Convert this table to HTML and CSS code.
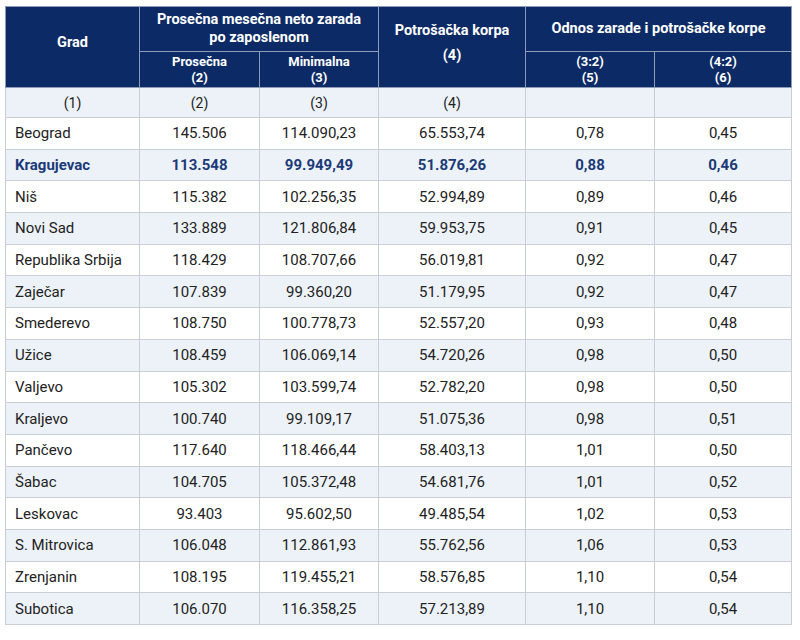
FILE: index.html
```html
<!DOCTYPE html>
<html lang="sr">
<head>
    <meta charset="UTF-8">
    <meta name="viewport" content="width=device-width, initial-scale=1.0">
    <title>Zarade i potrošačka korpa</title>
    <link rel="stylesheet" href="styles.css">
</head>
<body>
<table class="wage-table">
    <colgroup>
        <col class="c-city">
        <col class="c-avg">
        <col class="c-min">
        <col class="c-basket">
        <col class="c-r1">
        <col class="c-r2">
    </colgroup>
    <thead>
        <tr class="head-top">
            <th rowspan="2" class="tall">Grad</th>
            <th colspan="2">Prosečna mesečna neto zarada<br>po zaposlenom</th>
            <th rowspan="2" class="tall basket">Potrošačka korpa<br>(4)</th>
            <th colspan="2">Odnos zarade i potrošačke korpe</th>
        </tr>
        <tr class="head-sub">
            <th>Prosečna<br>(2)</th>
            <th>Minimalna<br>(3)</th>
            <th>(3:2)<br>(5)</th>
            <th>(4:2)<br>(6)</th>
        </tr>
    </thead>
    <tbody>
        <tr class="index-row">
            <td class="num">(1)</td>
            <td>(2)</td>
            <td>(3)</td>
            <td>(4)</td>
            <td></td>
            <td></td>
        </tr>
        <tr><td>Beograd</td><td>145.506</td><td>114.090,23</td><td>65.553,74</td><td>0,78</td><td>0,45</td></tr>
        <tr class="highlight"><td>Kragujevac</td><td>113.548</td><td>99.949,49</td><td>51.876,26</td><td>0,88</td><td>0,46</td></tr>
        <tr><td>Niš</td><td>115.382</td><td>102.256,35</td><td>52.994,89</td><td>0,89</td><td>0,46</td></tr>
        <tr><td>Novi Sad</td><td>133.889</td><td>121.806,84</td><td>59.953,75</td><td>0,91</td><td>0,45</td></tr>
        <tr><td>Republika Srbija</td><td>118.429</td><td>108.707,66</td><td>56.019,81</td><td>0,92</td><td>0,47</td></tr>
        <tr><td>Zaječar</td><td>107.839</td><td>99.360,20</td><td>51.179,95</td><td>0,92</td><td>0,47</td></tr>
        <tr><td>Smederevo</td><td>108.750</td><td>100.778,73</td><td>52.557,20</td><td>0,93</td><td>0,48</td></tr>
        <tr><td>Užice</td><td>108.459</td><td>106.069,14</td><td>54.720,26</td><td>0,98</td><td>0,50</td></tr>
        <tr><td>Valjevo</td><td>105.302</td><td>103.599,74</td><td>52.782,20</td><td>0,98</td><td>0,50</td></tr>
        <tr><td>Kraljevo</td><td>100.740</td><td>99.109,17</td><td>51.075,36</td><td>0,98</td><td>0,51</td></tr>
        <tr><td>Pančevo</td><td>117.640</td><td>118.466,44</td><td>58.403,13</td><td>1,01</td><td>0,50</td></tr>
        <tr><td>Šabac</td><td>104.705</td><td>105.372,48</td><td>54.681,76</td><td>1,01</td><td>0,52</td></tr>
        <tr><td>Leskovac</td><td>93.403</td><td>95.602,50</td><td>49.485,54</td><td>1,02</td><td>0,53</td></tr>
        <tr><td>S. Mitrovica</td><td>106.048</td><td>112.861,93</td><td>55.762,56</td><td>1,06</td><td>0,53</td></tr>
        <tr><td>Zrenjanin</td><td>108.195</td><td>119.455,21</td><td>58.576,85</td><td>1,10</td><td>0,54</td></tr>
        <tr><td>Subotica</td><td>106.070</td><td>116.358,25</td><td>57.213,89</td><td>1,10</td><td>0,54</td></tr>
    </tbody>
</table>
</body>
</html>
```
FILE: styles.css
```css
body {
    margin: 0;
    padding: 6px 9px 0 5px;
    background: white;
    font-family: Roboto, 'Liberation Sans', sans-serif;
    color: #222;
}

.wage-table {
    width: 786px;
    border-collapse: collapse;
    table-layout: fixed;
    border: 1px solid #c9ced4;
}

.c-city { width: 134px; }
.c-avg { width: 120px; }
.c-min { width: 119px; }
.c-basket { width: 147px; }
.c-r1 { width: 129px; }
.c-r2 { width: 137px; }

/* header */
.wage-table th {
    background: #0c2b66;
    color: white;
    font-weight: bold;
    text-align: center;
    border: 1px solid #8d9bb8;
    padding: 0 4px;
}

.head-top th {
    height: 44px;
    font-size: 14.5px;
    line-height: 18px;
}

.head-top th.tall {
    padding-bottom: 8px;
}

.head-top th.basket {
    line-height: 25px;
}

.head-sub th {
    height: 35px;
    font-size: 13px;
    line-height: 16px;
}

/* body */
.wage-table td {
    height: 30.7px;
    padding: 0 9px;
    font-size: 15px;
    text-align: center;
    border: 1px solid #c9ced4;
}

.wage-table td:first-child {
    text-align: left;
}

.wage-table tbody tr:nth-child(odd) {
    background: #edf2f8;
}

.index-row td {
    height: 29px;
    font-size: 14px;
}

.index-row td.num {
    text-align: center;
}

.highlight td {
    font-weight: bold;
    color: #1b3a78;
}
```
